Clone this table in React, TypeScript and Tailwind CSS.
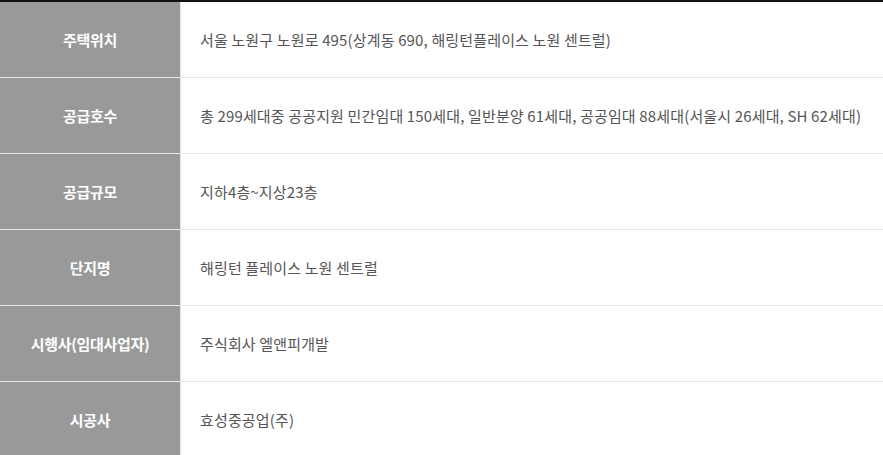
import React from "react";

const rows: [string, string][] = [
  ["주택위치", "서울 노원구 노원로 495(상계동 690, 해링턴플레이스 노원 센트럴)"],
  ["공급호수", "총 299세대중 공공지원 민간임대 150세대, 일반분양 61세대, 공공임대 88세대(서울시 26세대, SH 62세대)"],
  ["공급규모", "지하4층~지상23층"],
  ["단지명", "해링턴 플레이스 노원 센트럴"],
  ["시행사(임대사업자)", "주식회사 엘앤피개발"],
  ["시공사", "효성중공업(주)"],
];

export default function App() {
  return (
    <div
      className="w-[883px] h-[455px] overflow-hidden bg-white"
      style={{ fontFamily: '"Noto Sans CJK KR", "Noto Sans", sans-serif' }}
    >
      <div className="border-t-2 border-[#111111]">
        {rows.map(([k, v]) => (
          <div key={k} className="flex h-[76px] border-b border-[#e6e6e6]">
            <div className="w-[180px] shrink-0 bg-[#999999] flex items-center justify-center text-white text-[15px] font-bold tracking-[-0.3px] pt-[2px]">
              {k}
            </div>
            <div className="flex-1 border-l border-[#e2e3e8] flex items-center pl-[19px] pt-[2px] text-[15px] text-[#555555] tracking-[0.15px]">
              {v}
            </div>
          </div>
        ))}
      </div>
    </div>
  );
}
